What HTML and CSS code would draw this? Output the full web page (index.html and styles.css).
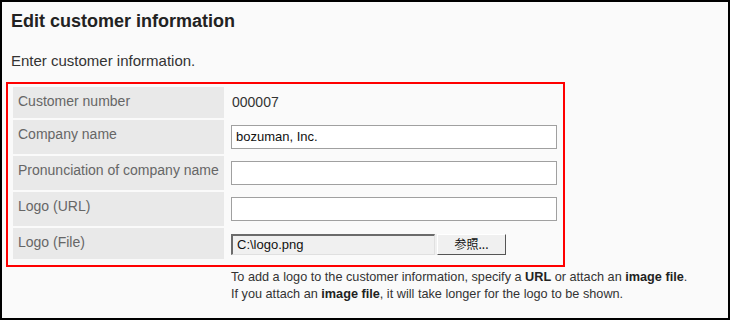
FILE: index.html
```html
<!DOCTYPE html>
<html>
<head>
<meta charset="utf-8">
<link rel="stylesheet" href="styles.css">
</head>
<body>
<div class="page">
  <h1 class="title">Edit customer information</h1>
  <p class="lead">Enter customer information.</p>
  <div class="highlight">
    <div class="form">
      <div class="label r1">Customer number</div>
      <div class="value r1"><span class="number">000007</span></div>
      <div class="label r2">Company name</div>
      <div class="value r2"><div class="field">bozuman, Inc.</div></div>
      <div class="label r2">Pronunciation of company name</div>
      <div class="value r2"><div class="field"></div></div>
      <div class="label r2">Logo (URL)</div>
      <div class="value r2"><div class="field"></div></div>
      <div class="label r1">Logo (File)</div>
      <div class="value r1">
        <div class="file">
          <div class="file-path">C:\logo.png</div>
          <div class="file-btn">参照...</div>
        </div>
      </div>
    </div>
  </div>
  <div class="help">
    <div>To add a logo to the customer information, specify a <b>URL</b> or attach an <b>image file</b>.</div>
    <div>If you attach an <b>image file</b>, it will take longer for the logo to be shown.</div>
  </div>
</div>
</body>
</html>
```
FILE: styles.css
```css
html, body {
  margin: 0;
  padding: 0;
}
body {
  font-family: "Liberation Sans", Arial, sans-serif;
  color: #333;
  background: #fafafa;
}
.page {
  box-sizing: border-box;
  width: 730px;
  height: 320px;
  border: 2px solid #000;
  background: #fafafa;
  padding: 9px 4px 0 4px;
}
.title {
  margin: 0 0 0 5px;
  font-size: 18px;
  font-weight: bold;
  line-height: 21px;
  color: #222;
}
.lead {
  margin: 20px 0 0 5px;
  font-size: 15px;
  line-height: 17px;
  color: #333;
}
.highlight {
  margin-top: 13px;
  width: 559px;
  box-sizing: border-box;
  border: 2px solid #f00;
  padding: 3px 5px 6px 5px;
}
.form {
  display: grid;
  grid-template-columns: 211px 1fr;
  column-gap: 2px;
  row-gap: 2px;
}
.label {
  background: #e9e9e9;
  color: #666;
  font-size: 14px;
  line-height: 16px;
  padding: 6px 0 0 5px;
  box-sizing: border-box;
}
.r1 { height: 31px; }
.r2 { height: 34px; }
.value {
  padding-left: 5px;
  display: flex;
  align-items: center;
}
.number {
  font-size: 14px;
  color: #333;
  margin-left: 1px;
  margin-top: -1px;
}
.field {
  box-sizing: border-box;
  width: 326px;
  height: 24px;
  border: 1px solid #a0a0a0;
  background: #fff;
  font-size: 13px;
  color: #111;
  line-height: 22px;
  padding-left: 4px;
}
.file {
  display: flex;
  width: 275px;
  height: 21px;
  background: #f0f0f0;
  box-sizing: border-box;
  align-items: stretch;
  margin-top: 1px;
}
.file-path {
  box-sizing: border-box;
  width: 204px;
  border-top: 2px solid #6b6b6b;
  border-left: 2px solid #6b6b6b;
  border-right: 1px solid #e0e0e0;
  border-bottom: 1px solid #e0e0e0;
  background: #f0f0f0;
  font-size: 13px;
  line-height: 17px;
  color: #111;
  padding-left: 4px;
}
.file-btn {
  box-sizing: border-box;
  width: 69px;
  margin-left: 2px;
  border-top: 1px solid #fff;
  border-left: 1px solid #fff;
  border-right: 1px solid #555;
  border-bottom: 1px solid #555;
  background: #f0f0f0;
  font-family: "Noto Sans CJK JP", "Liberation Sans", sans-serif;
  font-size: 12px;
  line-height: 18px;
  color: #111;
  text-align: center;
}
.help {
  margin: 2px 0 0 225px;
  font-size: 12.7px;
  line-height: 17px;
  color: #333;
}
.help b {
  color: #222;
}
```
